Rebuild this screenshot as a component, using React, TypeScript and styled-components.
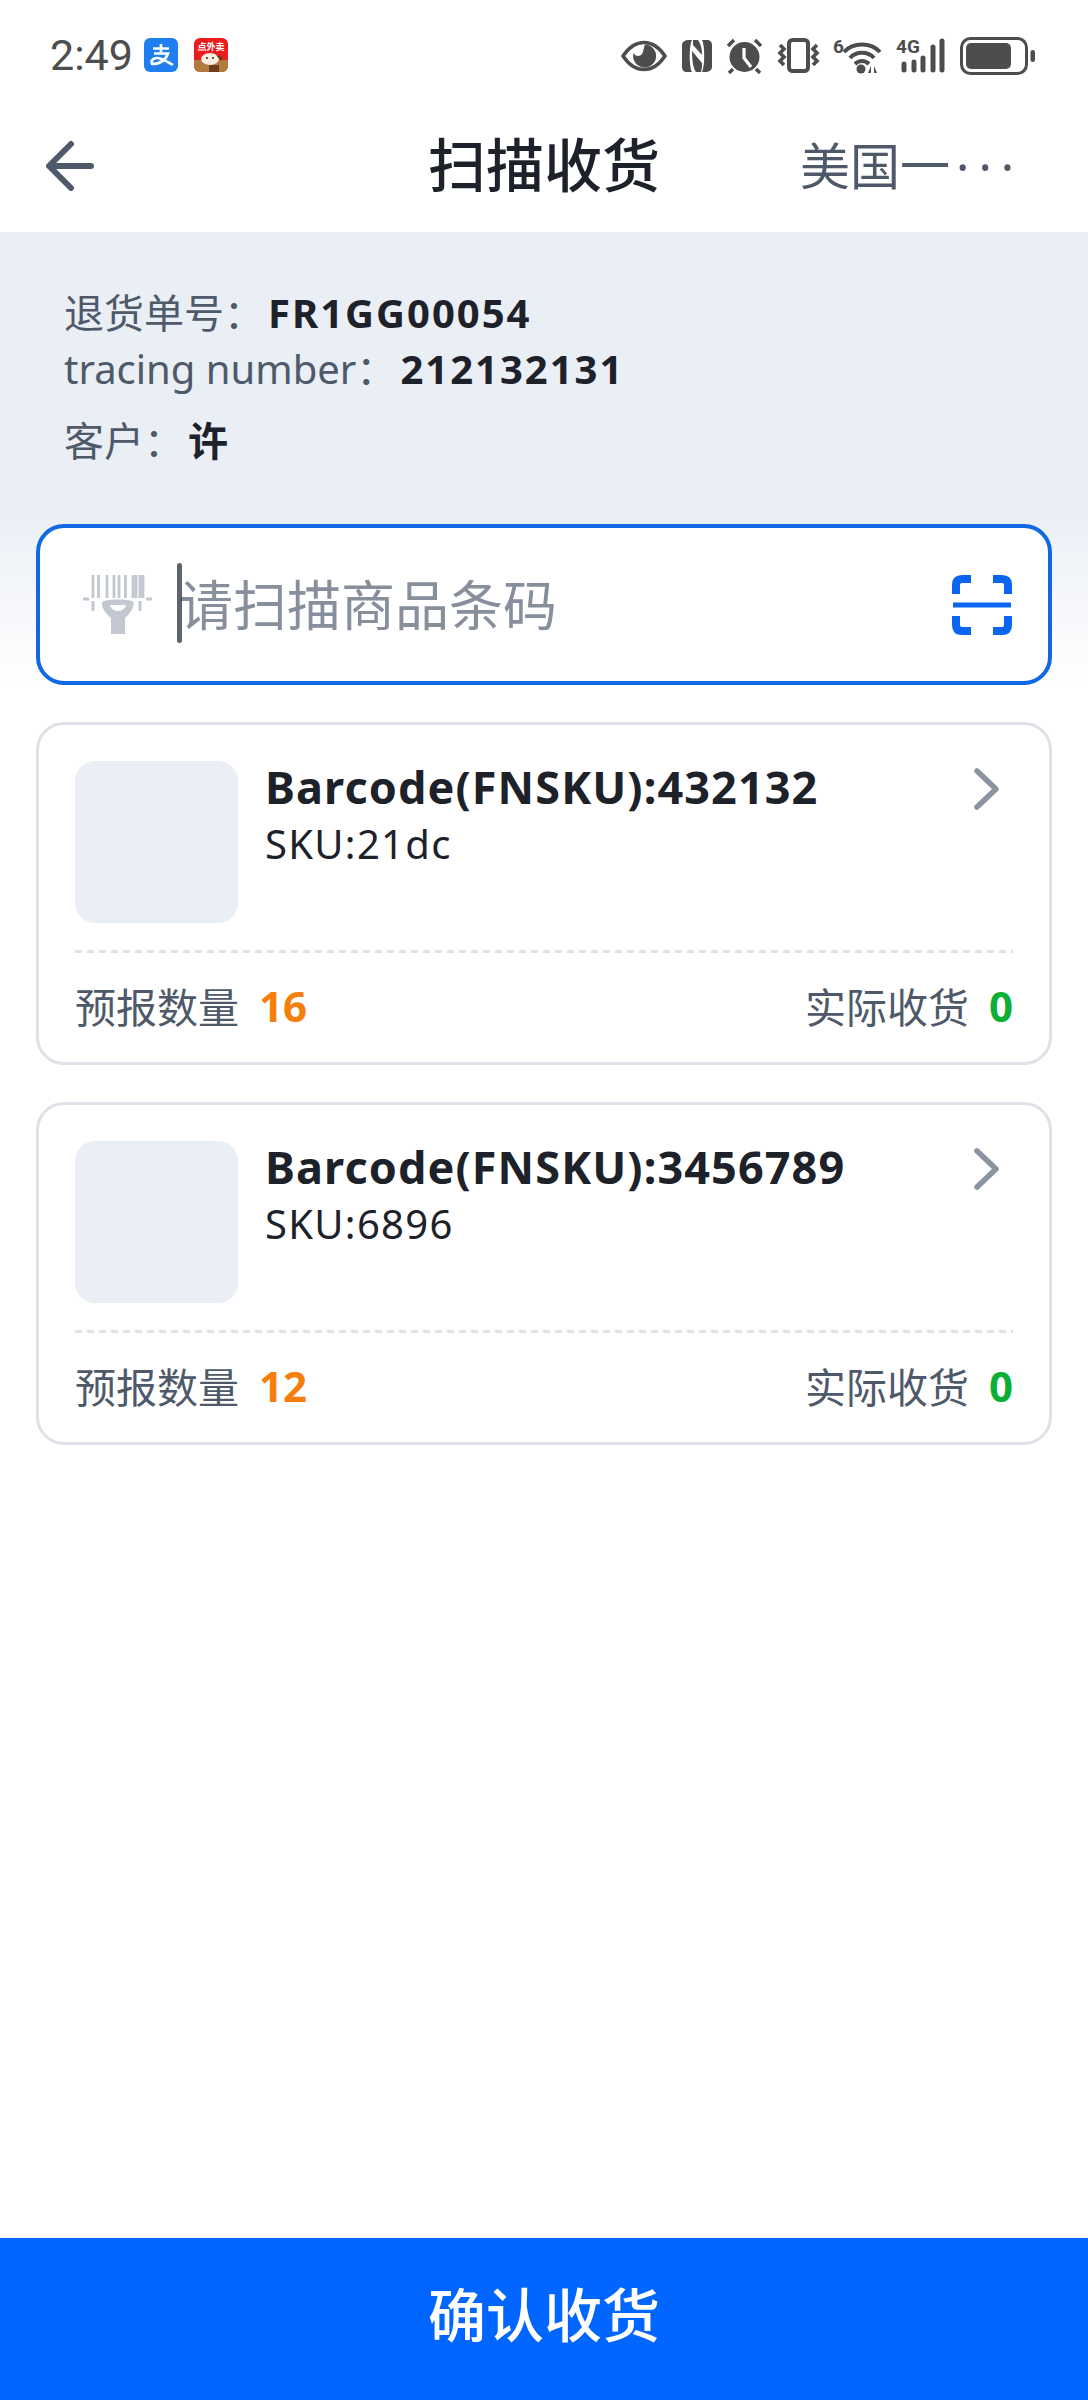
import * as React from 'react'
import styled, { createGlobalStyle } from 'styled-components'

const GlobalStyle = createGlobalStyle`
  html, body {
    margin: 0;
    padding: 0;
    background: #fff;
  }
  * {
    box-sizing: border-box;
  }
`

const fontStack = `"Noto Sans", "Noto Sans CJK SC", sans-serif`

const Page = styled.div`
  width: 1088px;
  height: 2400px;
  display: flex;
  flex-direction: column;
  background: #fff;
  font-family: ${fontStack};
  overflow: hidden;
`

const StatusBar = styled.div`
  height: 100px;
  padding: 37px 53px 0 50px;
  display: flex;
  justify-content: space-between;
  align-items: flex-start;
`

const StatusLeft = styled.div`
  display: flex;
  align-items: center;
  height: 36px;
`

const Time = styled.span`
  font-family: "Roboto", sans-serif;
  font-size: 43px;
  line-height: 36px;
  color: #4d4d4d;
  width: 94px;
`

const AppIcons = styled.div`
  display: flex;
  gap: 16px;
`

const StatusRight = styled.div`
  display: flex;
  align-items: center;
  gap: 13.5px;
  height: 37px;
  svg {
    display: block;
  }
`

const LabelledStatusSvg = styled.svg`
  margin-top: -4px;
`

const NavBar = styled.header`
  height: 132px;
  padding: 0 46px;
  display: grid;
  grid-template-columns: 1fr auto 1fr;
  align-items: center;
`

const NavTitle = styled.h1`
  margin: 0 0 2px;
  font-size: 58px;
  line-height: 80px;
  font-weight: 500;
  color: #1d2129;
`

const NavRight = styled.div`
  justify-self: end;
  width: 242px;
  font-size: 50px;
  line-height: 70px;
  color: #4e5969;
  white-space: nowrap;
`

const NavDots = styled.span`
  margin-left: 6px;
  letter-spacing: 9px;
`

const TopPanel = styled.section`
  height: 453px;
  padding: 56px 36px 0;
  background: linear-gradient(#eaeef5 0, #eaeef5 270px, #fff 453px);
`

const InfoLine = styled.div<{ $gap?: number }>`
  margin: ${p => p.$gap || 0}px 0 0 28px;
  font-size: 40px;
  line-height: 50px;
  color: #4e5969;
  display: flex;
`

const InfoValue = styled.span`
  font-size: 40px;
  font-weight: 700;
  color: #1d2129;
  letter-spacing: 2px;
`

const InfoLabel = styled.span`
  margin-right: 4px;
`

const SearchBox = styled.div`
  margin-top: 58px;
  height: 161px;
  border: 4px solid #1068e3;
  border-radius: 28px;
  background: #fff;
  padding: 0 36px 0 43px;
  display: flex;
  align-items: center;
`

const Caret = styled.span`
  width: 5px;
  height: 80px;
  margin: 0 -3px 4px 25px;
  border-radius: 3px;
  background: rgba(40, 48, 60, 0.75);
  position: relative;
`

const Placeholder = styled.span`
  flex: 1;
  font-size: 54px;
  line-height: 80px;
  color: #878f9c;
`

const CardList = styled.main`
  flex: 1;
  padding: 37px 36px 0;
  display: flex;
  flex-direction: column;
  gap: 37px;
`

const Card = styled.article`
  height: 343px;
  border: 3px solid #dee1e8;
  border-radius: 28px;
  padding: 36px 36px 0;
`

const CardTop = styled.div`
  display: flex;
  height: 162px;
`

const Thumb = styled.div`
  width: 163px;
  height: 162px;
  border-radius: 20px;
  background: #eaeef5;
`

const CardText = styled.div`
  flex: 1;
  margin-left: 27px;
`

const Barcode = styled.div`
  margin-top: -1px;
  font-size: 45px;
  font-weight: 700;
  line-height: 54px;
  letter-spacing: 1.1px;
  color: #1d2129;
  white-space: nowrap;
`

const Sku = styled.div`
  margin-top: 3px;
  font-size: 40px;
  line-height: 54px;
  letter-spacing: 1.3px;
  color: #1d2129;
`

const Chevron = styled.svg`
  margin: 7px 13px 0 0;
  flex: none;
`

const Dashes = styled.div`
  margin-top: 27px;
  height: 3px;
  background: repeating-linear-gradient(90deg, #dfe2e8 0, #dfe2e8 7px, transparent 7px, transparent 12px);
`

const CardBottom = styled.div`
  height: 104px;
  display: flex;
  justify-content: space-between;
  align-items: center;
  font-size: 41px;
  color: #4e5969;
`

const Stat = styled.span`
  display: flex;
  align-items: center;
`

const StatValue = styled.span<{ $color: string }>`
  margin-left: 20px;
  font-size: 42px;
  font-weight: 700;
  color: ${p => p.$color};
`

const ConfirmBar = styled.button`
  flex: none;
  height: 162px;
  width: 100%;
  border: 0;
  padding: 0 0 14px;
  background: #0066ff;
  color: #fff;
  font-family: ${fontStack};
  font-size: 58px;
  font-weight: 500;
`

const ink = '#4d4d4d'

const AlipayIcon = () => (
  <svg width="34" height="34" viewBox="0 0 34 34">
    <rect width="34" height="34" rx="6" fill="#1f7ff0" />
    <path d="M9 10.500H25M17 6V14M10 15.500H24C22 21 17 26 8 26C6 22 11 19 16 20.500C20 21.800 24 24 29 27" fill="none" stroke="#fff" strokeWidth="2.600" />
  </svg>
)

const TakeoutIcon = () => (
  <svg width="34" height="34" viewBox="0 0 34 34">
    <rect width="34" height="34" rx="6" fill="#ec1c1c" />
    <path d="M0 22H34V28C34 31 31 34 28 34H6C3 34 0 31 0 28Z" fill="#b27a3c" />
    <text x="17" y="12" textAnchor="middle" fontSize="9" fontWeight="700" fill="#fff" fontFamily="Noto Sans CJK SC">点外卖</text>
    <ellipse cx="16" cy="21" rx="9" ry="6" fill="#fbeee2" />
    <circle cx="13" cy="20" r="1" fill="#33261a" />
    <circle cx="19" cy="20" r="1" fill="#33261a" />
    <path d="M22 17L29 19L27 23Z" fill="#6b3d1c" />
    <rect x="15" y="27" width="10" height="7" fill="#6b3d1c" />
  </svg>
)

const EyeIcon = () => (
  <svg width="46" height="32" viewBox="0 0 46 32">
    <path d="M2 16C8 7 15 2.500 23 2.500S38 7 44 16C38 25 31 29.500 23 29.500S8 25 2 16Z" fill="none" stroke={ink} strokeWidth="3.500" />
    <path d="M24 4.500A11.500 11.500 0 1 1 12.500 13C14 16 18 17 20.500 14.500C22.500 12.500 22.500 8 24 4.500Z" fill={ink} />
  </svg>
)

const NfcIcon = () => (
  <svg width="32" height="34" viewBox="0 0 32 34">
    <path d="M8 1H11C8 6 8 28 11 33H6C3 33 1 31 1 28V6C1 3 4 1 8 1Z" fill={ink} />
    <path d="M24 33H21C24 28 24 6 21 1H26C29 1 31 3 31 6V28C31 31 28 33 24 33Z" fill={ink} />
    <path d="M12 1H17C20 5 21 10 21 16L12 6ZM11 12L21 24C21 27 21 30 20 33H15C12 29 11 20 11 12Z" fill={ink} />
  </svg>
)

const AlarmIcon = () => (
  <svg width="37" height="36" viewBox="0 0 37 36">
    <circle cx="18.500" cy="19" r="15" fill={ink} />
    <path d="M18 10V20L25 29" fill="none" stroke="#fff" strokeWidth="3.200" />
    <path d="M2 8L8 2M35 8L29 2M7 31L3 35M30 31L34 35" fill="none" stroke={ink} strokeWidth="3.500" />
  </svg>
)

const VibrateIcon = () => (
  <svg width="43" height="35" viewBox="0 0 43 35">
    <rect x="12" y="2" width="19" height="31" rx="3.500" fill="none" stroke={ink} strokeWidth="4" />
    <path d="M3 7L7 11L3 15L7 19L3 23L7 27M40 7L36 11L40 15L36 19L40 23L36 27" fill="none" stroke={ink} strokeWidth="3.600" />
  </svg>
)

const WifiIcon = () => (
  <LabelledStatusSvg width="49" height="40" viewBox="0 -4 49 40">
    <text x="0" y="15" fontSize="19" fontWeight="700" fill={ink} fontFamily="Roboto">6</text>
    <path d="M11 14C20 4 38 4 47 14M17 20C23 13 35 13 41 20M22 26C26 22 32 22 36 26" fill="none" stroke={ink} strokeWidth="4" />
    <circle cx="28" cy="31" r="4.500" fill={ink} />
    <path d="M38 28V35H35ZM41 28V35H44Z" fill={ink} />
  </LabelledStatusSvg>
)

const SignalIcon = () => (
  <LabelledStatusSvg width="51" height="40" viewBox="0 -4 51 40">
    <text x="0" y="15" fontSize="19" fontWeight="700" fill={ink} fontFamily="Roboto">4G</text>
    <path d="M8 26V32M18 24V32M27 20V32M37 9V32M46 3V32" fill="none" stroke={ink} strokeWidth="5" strokeLinecap="round" />
  </LabelledStatusSvg>
)

const BatteryIcon = () => (
  <svg width="75" height="38" viewBox="0 0 75 38">
    <rect x="1.500" y="1.500" width="65" height="35" rx="9" fill="none" stroke={ink} strokeWidth="3" />
    <rect x="6" y="6" width="45" height="26" rx="5" fill={ink} />
    <rect x="70.500" y="13" width="4.500" height="12" rx="2.200" fill={ink} />
  </svg>
)

const BackIcon = () => (
  <svg width="48" height="52" viewBox="0 0 48 52">
    <path d="M45 26H4M25 4L3 26L25 48" fill="none" stroke="#4e5969" strokeWidth="6" strokeLinecap="round" strokeLinejoin="round" />
  </svg>
)

const ScannerIcon = () => (
  <svg width="69" height="59" viewBox="0 0 69 59" style={{ flex: 'none' }}>
    <path d="M10 0V23M15.500 0V23M24 0V23M31 0V23M36 0V23M42.500 0V23M50 0V23M53 0V23M57 0V23M60 0V23" stroke="#c2c7d0" strokeWidth="2.800" fill="none" />
    <path d="M0 24H6M63 24H69M10 26V36M57 26V36" stroke="#c2c7d0" strokeWidth="3" fill="none" />
    <path d="M21 26C28 24 41 24 49 26C51 26 51 29 50 32C48 38 44 41 42 43V59H28V43C26 41 21 37 19.500 32C18.500 29 19 26 21 26Z" fill="#c2c7d0" />
    <path d="M27 30H43C42 34 38 36 35 36C32 36 28 34 27 30Z" fill="#fff" />
  </svg>
)

const ScanIcon = () => (
  <svg width="60" height="60" viewBox="0 0 60 60">
    <path d="M19 4H10C6 4 4 6 4 10V19M41 4H50C54 4 56 6 56 10V19M19 56H10C6 56 4 54 4 50V41M41 56H50C54 56 56 54 56 50V41" fill="none" stroke="#0a66f0" strokeWidth="8" />
    <path d="M1 30H59" stroke="#0a66f0" strokeWidth="5" />
  </svg>
)

const items = [
  { barcode: '432132', sku: '21dc', forecast: 16, actual: 0 },
  { barcode: '3456789', sku: '6896', forecast: 12, actual: 0 },
]

export default function App() {
  return (
    <Page>
      <GlobalStyle />
      <StatusBar>
        <StatusLeft>
          <Time>2:49</Time>
          <AppIcons>
            <AlipayIcon />
            <TakeoutIcon />
          </AppIcons>
        </StatusLeft>
        <StatusRight>
          <EyeIcon />
          <NfcIcon />
          <AlarmIcon />
          <VibrateIcon />
          <WifiIcon />
          <SignalIcon />
          <BatteryIcon />
        </StatusRight>
      </StatusBar>
      <NavBar>
        <BackIcon />
        <NavTitle>扫描收货</NavTitle>
        <NavRight>美国一<NavDots>···</NavDots></NavRight>
      </NavBar>
      <TopPanel>
        <InfoLine>
          <InfoLabel>退货单号：</InfoLabel>
          <InfoValue>FR1GG00054</InfoValue>
        </InfoLine>
        <InfoLine $gap={6}>
          <InfoLabel>tracing number：</InfoLabel>
          <InfoValue>212132131</InfoValue>
        </InfoLine>
        <InfoLine $gap={22}>
          <InfoLabel>客户：</InfoLabel>
          <InfoValue>许</InfoValue>
        </InfoLine>
        <SearchBox>
          <ScannerIcon />
          <Caret />
          <Placeholder>请扫描商品条码</Placeholder>
          <ScanIcon />
        </SearchBox>
      </TopPanel>
      <CardList>
        {items.map(item => (
          <Card key={item.barcode}>
            <CardTop>
              <Thumb />
              <CardText>
                <Barcode>Barcode(FNSKU):{item.barcode}</Barcode>
                <Sku>SKU:{item.sku}</Sku>
              </CardText>
              <Chevron width="26" height="42" viewBox="0 0 26 42">
                <path d="M3 3L22 21L3 39" fill="none" stroke="#8a93a0" strokeWidth="5.500" strokeLinecap="round" strokeLinejoin="round" />
              </Chevron>
            </CardTop>
            <Dashes />
            <CardBottom>
              <Stat>
                预报数量
                <StatValue $color="#f57f0a">{item.forecast}</StatValue>
              </Stat>
              <Stat>
                实际收货
                <StatValue $color="#0aaf36">{item.actual}</StatValue>
              </Stat>
            </CardBottom>
          </Card>
        ))}
      </CardList>
      <ConfirmBar>确认收货</ConfirmBar>
    </Page>
  )
}
